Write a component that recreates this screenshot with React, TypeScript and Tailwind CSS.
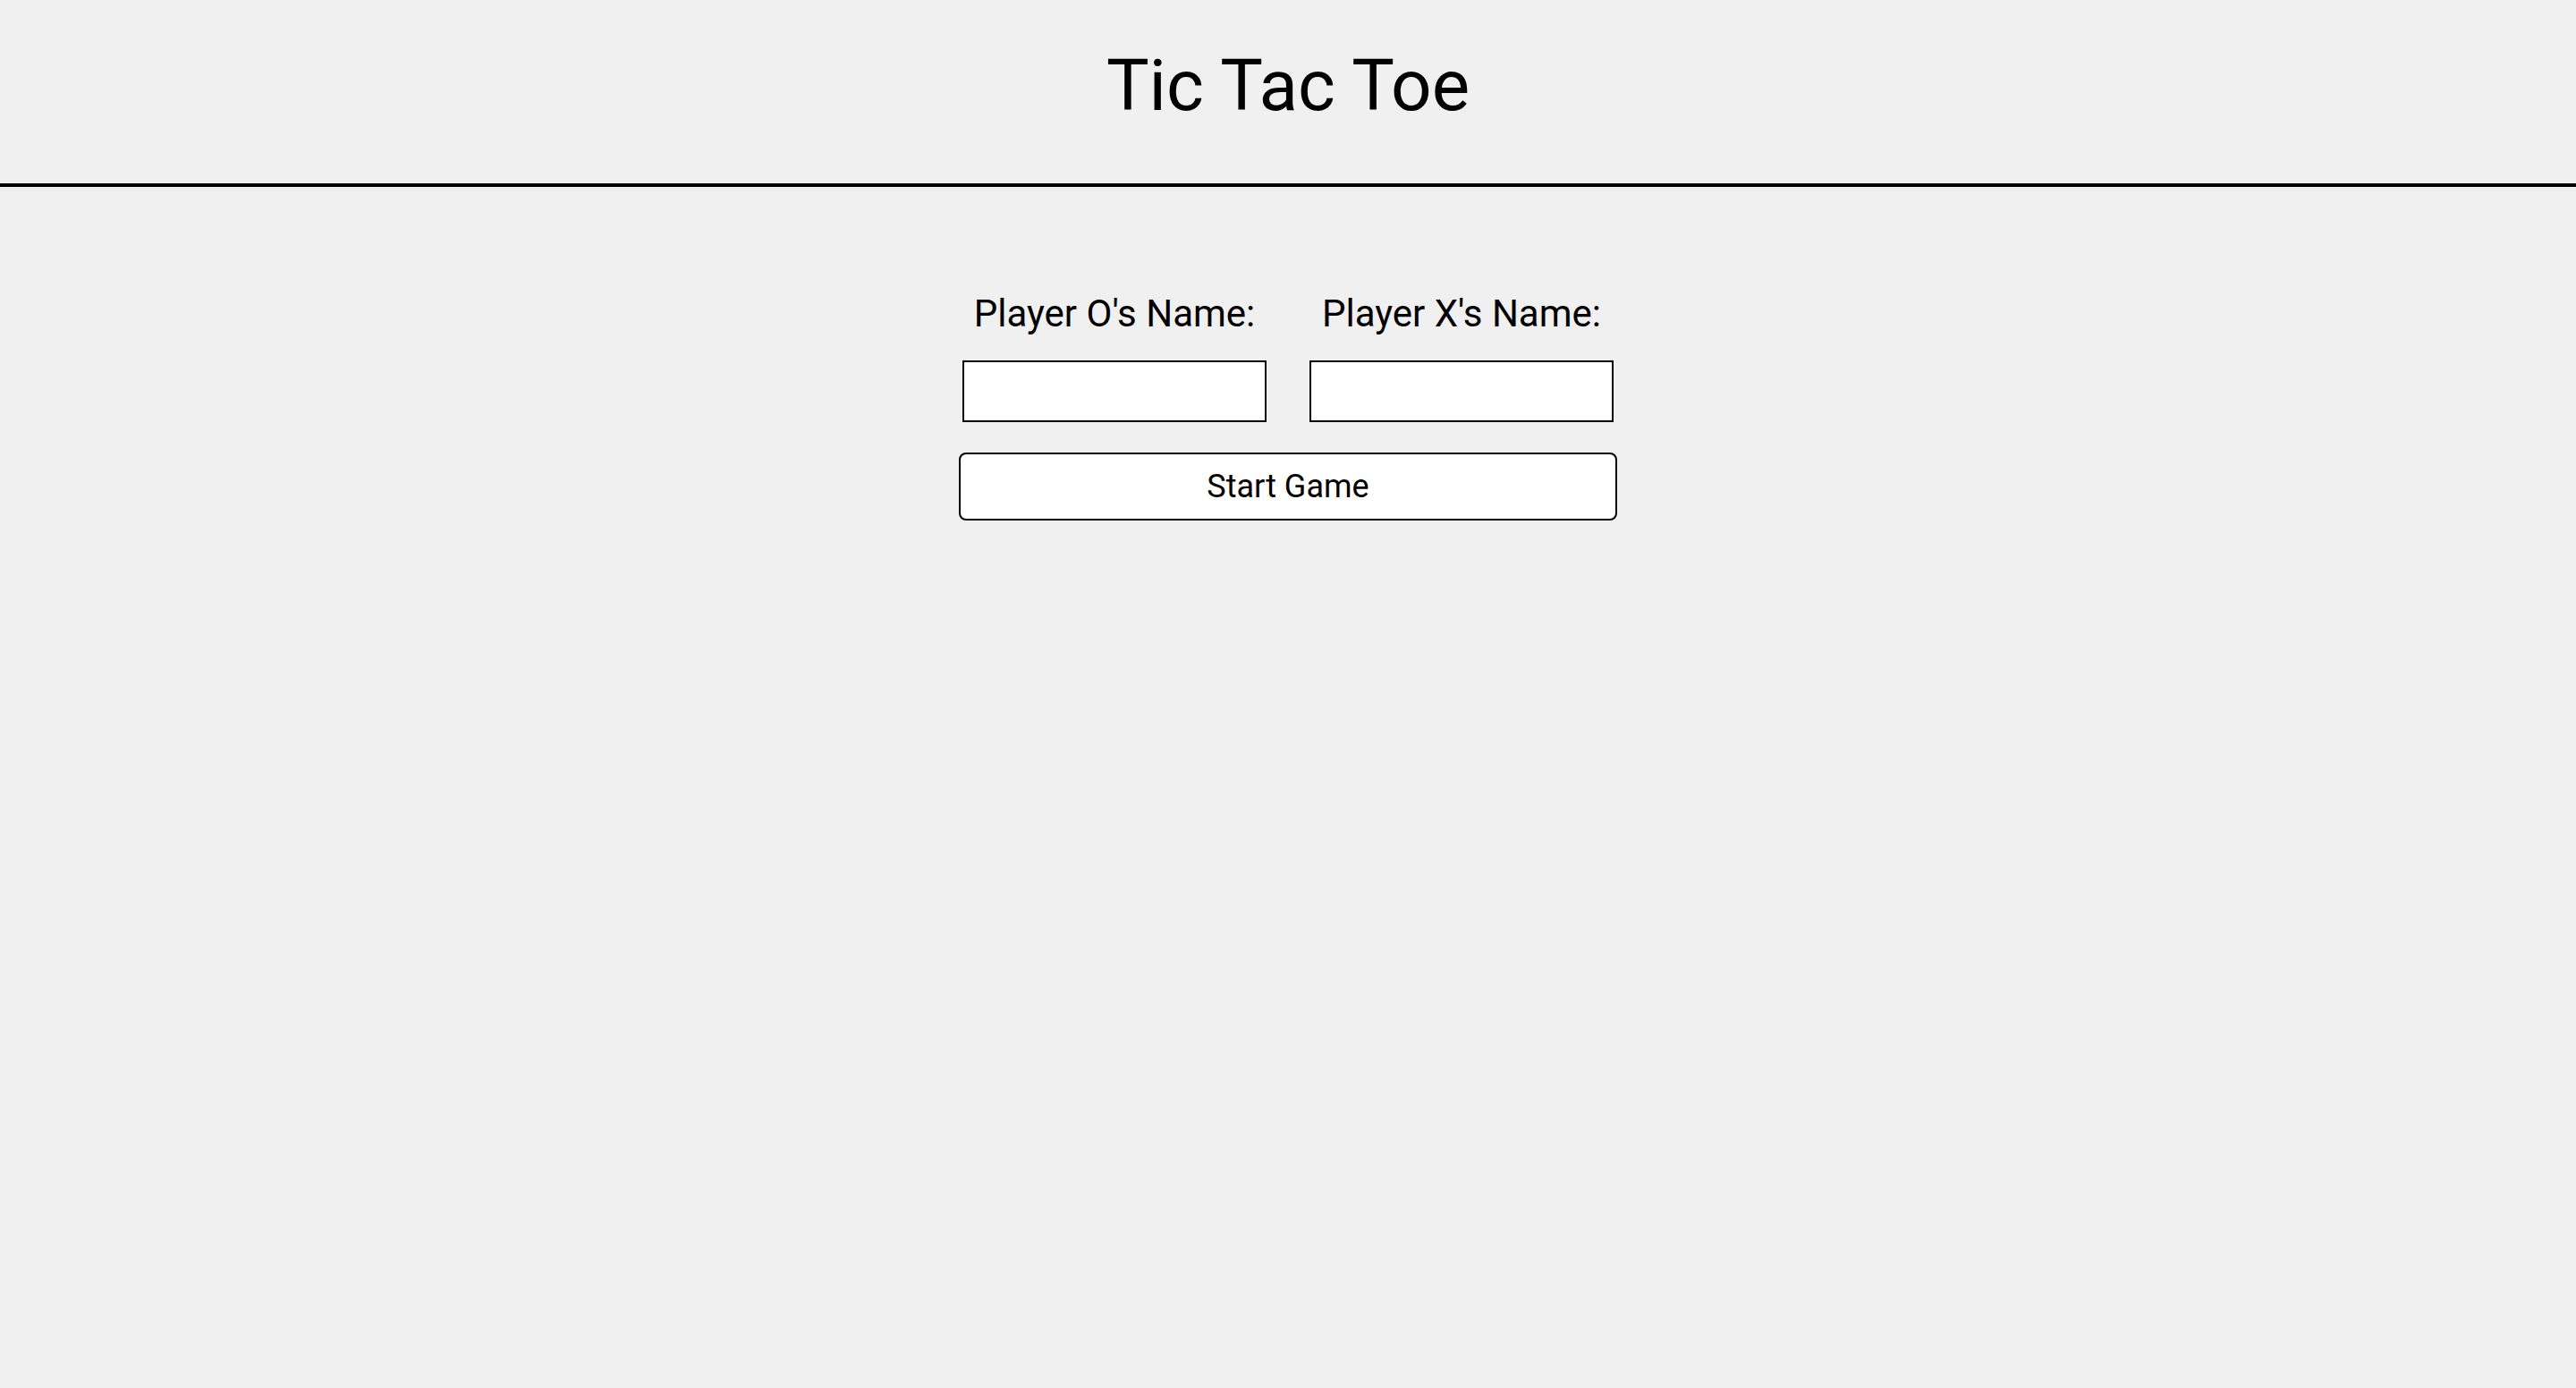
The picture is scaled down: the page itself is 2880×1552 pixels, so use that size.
import { useState } from "react";

const App = () => {
  const [playerO, setPlayerO] = useState("");
  const [playerX, setPlayerX] = useState("");

  return (
    <div className="min-h-screen bg-[#f0f0f0] text-black font-['Roboto',_'Liberation_Sans',_sans-serif]">
      {/* Header */}
      <header className="h-[209px] border-b-4 border-black pt-[56px]">
        <h1 className="text-center text-[80px] leading-none font-normal">
          Tic Tac Toe
        </h1>
      </header>

      {/* Player setup */}
      <main className="flex justify-center pt-[122px]">
        <div className="w-[736px] flex flex-col items-center">
          <div className="flex gap-[48px]">
            <div className="flex flex-col items-center">
              <label
                htmlFor="player-o"
                className="text-[42px] leading-[40px] whitespace-nowrap"
              >
                Player O's Name:
              </label>
              <input
                id="player-o"
                value={playerO}
                onChange={(e) => setPlayerO(e.target.value)}
                className="mt-[32px] w-[340px] h-[69px] bg-white border-2 border-black px-3 text-[32px] outline-none"
              />
            </div>
            <div className="flex flex-col items-center">
              <label
                htmlFor="player-x"
                className="text-[42px] leading-[40px] whitespace-nowrap"
              >
                Player X's Name:
              </label>
              <input
                id="player-x"
                value={playerX}
                onChange={(e) => setPlayerX(e.target.value)}
                className="mt-[32px] w-[340px] h-[69px] bg-white border-2 border-black px-3 text-[32px] outline-none"
              />
            </div>
          </div>
          <button className="mt-[34px] w-[736px] h-[76px] bg-white border-2 border-black rounded-[8px] text-[36px] leading-none cursor-pointer">
            Start Game
          </button>
        </div>
      </main>
    </div>
  );
};

export default App;
